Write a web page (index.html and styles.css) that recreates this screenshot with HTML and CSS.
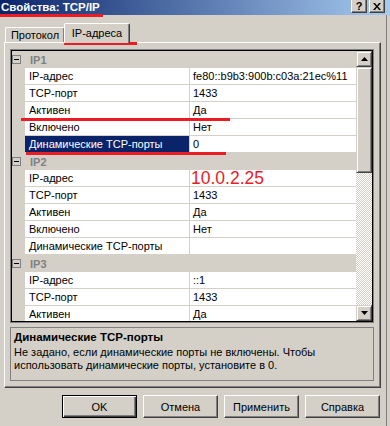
FILE: index.html
```html
<!DOCTYPE html>
<html lang="ru">
  <head>
    <meta charset="UTF-8" />
    <title>Свойства: TCP/IP</title>
    <link rel="stylesheet" href="styles.css">
  </head>
  <body>
    <div class="window">
      <!-- заголовок окна -->
      <div class="titlebar">
        <span class="title">Свойства: TCP/IP</span>
        <div class="caption-buttons">
          <span class="cap-btn help">?</span>
          <span class="cap-btn">
            <svg width="8" height="7" viewBox="0 0 8 7"><path d="M0 0h2l2 2.4L6 0h2L5 3.5 8 7H6L4 4.6 2 7H0l3-3.5z" fill="#000"/></svg>
          </span>
        </div>
      </div>

      <div class="client">
        <div class="tabs">
          <div class="tab">Протокол</div>
          <div class="tab active">IP-адреса</div>
        </div>

        <div class="panel">
          <!-- таблица свойств -->
          <div class="grid">
            <div class="list">
              <div class="cat">
                <svg class="toggle" width="9" height="9"><rect x="0.5" y="0.5" width="8" height="8" fill="none" stroke="#808080"/><path d="M2 4.5h5" stroke="#000"/></svg>
                IP1
              </div>
              <div class="row"><div class="name">IP-адрес</div><div class="value">fe80::b9b3:900b:c03a:21ec%11</div></div>
              <div class="row"><div class="name">TCP-порт</div><div class="value">1433</div></div>
              <div class="row"><div class="name">Активен</div><div class="value">Да</div></div>
              <div class="row"><div class="name">Включено</div><div class="value">Нет</div></div>
              <div class="row selected"><div class="name">Динамические TCP-порты</div><div class="value">0</div></div>

              <div class="cat">
                <svg class="toggle" width="9" height="9"><rect x="0.5" y="0.5" width="8" height="8" fill="none" stroke="#808080"/><path d="M2 4.5h5" stroke="#000"/></svg>
                IP2
              </div>
              <div class="row"><div class="name">IP-адрес</div><div class="value red-ip">10.0.2.25</div></div>
              <div class="row"><div class="name">TCP-порт</div><div class="value">1433</div></div>
              <div class="row"><div class="name">Активен</div><div class="value">Да</div></div>
              <div class="row"><div class="name">Включено</div><div class="value">Нет</div></div>
              <div class="row"><div class="name">Динамические TCP-порты</div><div class="value"></div></div>

              <div class="cat">
                <svg class="toggle" width="9" height="9"><rect x="0.5" y="0.5" width="8" height="8" fill="none" stroke="#808080"/><path d="M2 4.5h5" stroke="#000"/></svg>
                IP3
              </div>
              <div class="row"><div class="name">IP-адрес</div><div class="value">::1</div></div>
              <div class="row"><div class="name">TCP-порт</div><div class="value">1433</div></div>
              <div class="row"><div class="name">Активен</div><div class="value">Да</div></div>
            </div>

            <div class="scrollbar">
              <div class="sb-btn">
                <svg width="7" height="4"><path d="M3.5 0L7 4H0z" fill="#000"/></svg>
              </div>
              <div class="sb-thumb"></div>
              <div class="sb-track"></div>
              <div class="sb-btn">
                <svg width="7" height="4"><path d="M0 0h7L3.5 4z" fill="#000"/></svg>
              </div>
            </div>
          </div>

          <!-- описание выбранного свойства -->
          <div class="desc">
            <div class="desc-title">Динамические TCP-порты</div>
            <div class="desc-text">Не задано, если динамические порты не включены. Чтобы<br>использовать динамические порты, установите в 0.</div>
          </div>
        </div>

        <div class="buttons">
          <button type="button" class="btn default">OK</button>
          <button type="button" class="btn">Отмена</button>
          <button type="button" class="btn">Применить</button>
          <button type="button" class="btn">Справка</button>
        </div>
      </div>

      <!-- красные пометки поверх скриншота -->
      <div class="mark mark-title"></div>
      <div class="mark mark-tab"></div>
      <div class="mark mark-active"></div>
      <div class="mark mark-dyn"></div>
    </div>
  </body>
</html>
```

FILE: styles.css
```css
body {
  margin: 0;
  background-color: #d4d0c8;
  font-family: "Liberation Sans", Arial, sans-serif;
  font-size: 11px;
  color: #000;
}

.window {
  position: relative;
  width: 390px;
  height: 426px;
  overflow: hidden;
}

/* заголовок */
.titlebar {
  display: flex;
  justify-content: space-between;
  height: 15px;
  padding: 0 5px 0 1px;
  background: linear-gradient(to right, #0a246a, #a6caf0);
}

.title {
  color: #fff;
  font-weight: bold;
  font-size: 11.5px;
  line-height: 14px;
}

.caption-buttons {
  display: flex;
  gap: 2px;
  margin-top: -1px;
}

.cap-btn {
  display: flex;
  align-items: center;
  justify-content: center;
  width: 16px;
  height: 14px;
  box-sizing: border-box;
  background-color: #d4d0c8;
  border: 1px solid;
  border-color: #fff #404040 #404040 #fff;
  box-shadow: inset -1px -1px #808080;
}

.cap-btn.help {
  font-weight: bold;
  font-size: 11px;
  line-height: 12px;
}

/* клиентская область */
.client {
  width: 386px;
  height: 411px;
  border-right: 1px solid #808080;
}

.tabs {
  display: flex;
  align-items: flex-end;
  height: 27px;
  padding-left: 5px;
}

.tab {
  width: 60px;
  height: 15px;
  box-sizing: border-box;
  border: 1px solid;
  border-bottom: none;
  border-color: #fff #404040 transparent #fff;
  border-radius: 2px 2px 0 0;
  box-shadow: inset -1px 0 #808080;
  text-align: center;
  line-height: 14px;
}

.tab.active {
  position: relative;
  z-index: 1;
  width: 66px;
  height: 20px;
  margin-left: -1px;
  margin-bottom: -1px;
  background-color: #d4d0c8;
  line-height: 18px;
}

.panel {
  width: 377px;
  height: 346px;
  margin-left: 4px;
  padding: 7px 0 0 6px;
  box-sizing: border-box;
  border: 1px solid;
  border-color: #fff #404040 #404040 #fff;
  box-shadow: inset -1px -1px #808080;
}

/* таблица свойств */
.grid {
  display: flex;
  width: 362px;
  height: 272px;
  box-sizing: border-box;
  border: 1px solid #000;
  outline: 1px solid #808080;
}

.list {
  width: 344px;
  height: 270px;
  overflow: hidden;
}

.cat {
  display: flex;
  align-items: center;
  height: 17px;
  color: #808080;
  font-weight: bold;
}

.toggle {
  margin-right: 9px;
}

.row {
  display: flex;
  height: 17px;
  margin-left: 13px;
  line-height: 16px;
  white-space: nowrap;
}

.name {
  width: 165px;
  box-sizing: border-box;
  padding-left: 4px;
  background-color: #fff;
  border-right: 1px solid #d4d0c8;
  border-bottom: 1px solid #d4d0c8;
}

.value {
  flex: 1;
  padding-left: 3px;
  background-color: #fff;
  border-bottom: 1px solid #d4d0c8;
}

.row.selected .name {
  background-color: #0a246a;
  color: #fff;
}

.value.red-ip {
  padding-left: 1px;
  color: #ed1c24;
  font-size: 17.5px;
}

/* полоса прокрутки */
.scrollbar {
  display: flex;
  flex-direction: column;
  width: 16px;
}

.sb-btn,
.sb-thumb {
  box-sizing: border-box;
  background-color: #d4d0c8;
  border: 1px solid;
  border-color: #d4d0c8 #404040 #404040 #d4d0c8;
  box-shadow: inset 1px 1px #fff, inset -1px -1px #808080;
}

.sb-btn {
  display: flex;
  align-items: center;
  justify-content: center;
  height: 16px;
}

.sb-thumb {
  height: 106px;
}

.sb-track {
  flex: 1;
  background: repeating-conic-gradient(#fff 0 25%, #d4d0c8 0 50%) 0 0 / 2px 2px;
}

/* описание */
.desc {
  width: 364px;
  height: 54px;
  margin: 5px 0 0 -1px;
  padding: 2px 3px;
  box-sizing: border-box;
  border: 1px solid #808080;
}

.desc-title {
  font-weight: bold;
  font-size: 11.5px;
  line-height: 14px;
}

.desc-text {
  margin-top: 2px;
  line-height: 13px;
}

/* кнопки */
.buttons {
  display: flex;
  justify-content: flex-end;
  gap: 6px;
  margin-top: 7px;
  padding-right: 6px;
}

.btn {
  width: 75px;
  height: 23px;
  padding: 0;
  font-family: inherit;
  font-size: 11px;
  color: #000;
  background-color: #d4d0c8;
  border: 1px solid;
  border-color: #fff #404040 #404040 #fff;
  box-shadow: inset -1px -1px #808080;
}

.btn.default {
  border-color: #000;
  box-shadow: inset 1px 1px #fff, inset -1px -1px #404040, inset -2px -2px #808080;
}

/* красные пометки */
.mark {
  position: absolute;
  height: 3px;
  background-color: #ed1c24;
}

.mark-title {
  left: 0;
  top: 14px;
  width: 103px;
}

.mark-tab {
  left: 64px;
  top: 42px;
  width: 73px;
}

.mark-active {
  left: 21px;
  top: 118px;
  width: 209px;
}

.mark-dyn {
  left: 26px;
  top: 152px;
  width: 200px;
}
```
